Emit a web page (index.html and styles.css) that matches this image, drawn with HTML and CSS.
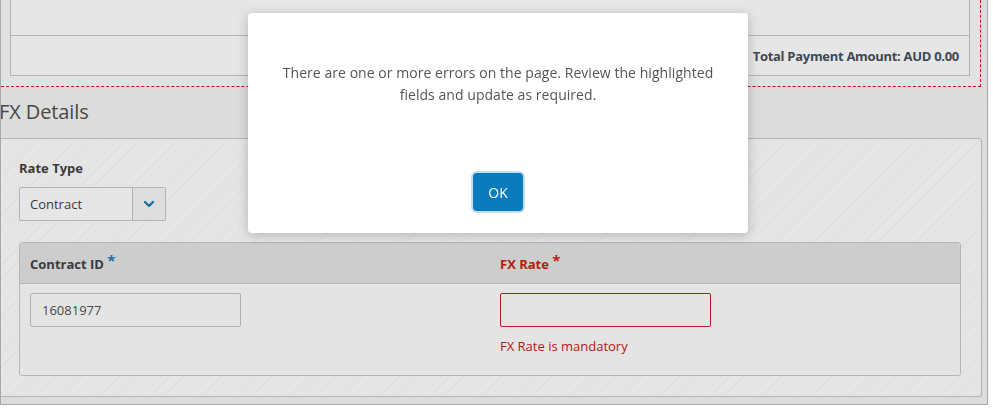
FILE: index.html
```html
<!DOCTYPE html>
<html lang="en">
<head>
<meta charset="utf-8">
<title>FX Details</title>
<link rel="stylesheet" href="styles.css">
</head>
<body>
<div class="page">
  <div class="summary">
    <div class="summary-box">
      <div class="summary-row"></div>
      <div class="summary-row total">Total Payment Amount: AUD 0.00</div>
    </div>
  </div>

  <h2 class="section-title">FX Details</h2>

  <div class="fx-box">
    <div class="field-label">Rate Type</div>
    <div class="select">
      <span class="select-value">Contract</span>
      <span class="select-btn">
        <svg width="12" height="8" viewBox="0 0 12 8"><path d="M2 2 L6 6 L10 2" fill="none" stroke="#1b6e9f" stroke-width="2.4" stroke-linecap="round" stroke-linejoin="round"/></svg>
      </span>
    </div>

    <div class="fx-table">
      <div class="fx-head">
        <div class="fx-cell">Contract ID <span class="req blue">*</span></div>
        <div class="fx-cell error">FX Rate <span class="req red">*</span></div>
      </div>
      <div class="fx-body">
        <div class="fx-cell">
          <div class="input">16081977</div>
        </div>
        <div class="fx-cell">
          <div class="input invalid"></div>
          <div class="error-msg">FX Rate is mandatory</div>
        </div>
      </div>
    </div>
  </div>
</div>

<div class="modal">
  <p class="modal-text">There are one or more errors on the page. Review the highlighted fields and update as required.</p>
  <div class="modal-actions">
    <button class="btn-ok">OK</button>
  </div>
</div>
</body>
</html>
```

FILE: styles.css
```css
* { box-sizing: border-box; }

html, body {
  margin: 0;
  padding: 0;
  background: #ffffff;
  font-family: "Open Sans", "Liberation Sans", sans-serif;
  overflow: hidden;
}

.page {
  width: 988px;
  height: 405px;
  background: #dcdcdc;
  border-left: 1px solid #a9a9a9;
  border-right: 1px solid #a9a9a9;
  border-bottom: 1px solid #a9a9a9;
  box-shadow: 0 2px 3px rgba(0, 0, 0, 0.12);
  overflow: hidden;
}

.summary {
  width: 980px;
  height: 87px;
  background: #e2e2e2;
  border-right: 1px dashed #c2180c;
  border-bottom: 1px dashed #c2180c;
  padding-left: 9px;
}

.summary-box {
  width: 960px;
  background: #e6e6e6;
  border: 1px solid #b3b3b3;
  border-top: none;
}

.summary-row {
  height: 36px;
  border-bottom: 1px solid #b3b3b3;
}

.summary-row.total {
  height: 39px;
  border-bottom: none;
  display: flex;
  align-items: center;
  justify-content: flex-end;
  padding-right: 10px;
  font-size: 13px;
  font-weight: 700;
  color: #3c4955;
  letter-spacing: -0.3px;
}

.section-title {
  margin: 11px 0 12px -2px;
  font-size: 20px;
  line-height: 28px;
  font-weight: 400;
  color: #474747;
  letter-spacing: -0.1px;
}

.fx-box {
  width: 981px;
  height: 259px;
  border: 1px solid #b5b5b5;
  border-left: none;
  border-radius: 0 3px 3px 0;
  background-color: #e4e4e4;
  background-image: repeating-linear-gradient(135deg, #e5e5e5 0px, #e5e5e5 8px, #dfdfdf 8px, #dfdfdf 9px);
  padding: 20px 19px 0 18px;
}

.field-label {
  font-size: 13px;
  line-height: 18px;
  font-weight: 700;
  color: #3a3a3a;
}

.select {
  margin-top: 10px;
  width: 147px;
  height: 34px;
  display: flex;
  border: 1px solid #b3b3b3;
  border-radius: 2px;
  background: #e6e6e6;
}

.select-value {
  width: 113px;
  padding-left: 10px;
  display: flex;
  align-items: center;
  font-size: 13px;
  color: #3a3a3a;
  border-right: 1px solid #b3b3b3;
}

.select-btn {
  flex: 1;
  display: flex;
  align-items: center;
  justify-content: center;
  background: #dedede;
}

.fx-table {
  margin-top: 21px;
  width: 942px;
  border: 1px solid #b5b5b5;
  border-radius: 3px;
  overflow: hidden;
}

.fx-head,
.fx-body {
  display: grid;
  grid-template-columns: 470px 1fr;
}

.fx-head {
  height: 41px;
  background: #cdcdcd;
  border-bottom: 1px solid #b5b5b5;
  align-items: center;
}

.fx-head .fx-cell {
  padding-left: 10px;
  font-size: 13px;
  font-weight: 700;
  color: #3a3a3a;
}

.fx-head .fx-cell.error { color: #b0200f; }

.req {
  font-size: 15px;
  font-weight: 700;
  position: relative;
  top: -3px;
}
.req.blue { color: #1c6fae; }
.req.red { color: #c0200d; }

.fx-body {
  background: #e4e4e4;
  height: 91px;
}

.fx-body .fx-cell {
  padding: 9px 0 0 10px;
}

.input {
  width: 211px;
  height: 34px;
  border: 1px solid #b0b0b0;
  border-radius: 2px;
  background: #e4e4e4;
  padding-left: 11px;
  display: flex;
  align-items: center;
  font-size: 13px;
  color: #4a4a4a;
}

.input.invalid {
  border-color: #b0200f;
}

.error-msg {
  margin-top: 10px;
  font-size: 13px;
  line-height: 18px;
  color: #b0200f;
}

.modal {
  position: fixed;
  left: 248px;
  top: 13px;
  width: 500px;
  height: 220px;
  background: #ffffff;
  border-radius: 4px;
  box-shadow: 0 2px 12px rgba(0, 0, 0, 0.22);
  display: flex;
  flex-direction: column;
  padding: 49px 30px 20px;
}

.modal-text {
  margin: 0;
  text-align: center;
  font-size: 14px;
  line-height: 22px;
  color: #555555;
  letter-spacing: 0.05px;
}

.modal-actions {
  margin-top: auto;
  display: flex;
  justify-content: center;
}

.btn-ok {
  width: 50px;
  height: 38px;
  margin: 2px;
  border: none;
  border-radius: 4px;
  background: #0a7bbd;
  box-shadow: 0 0 0 2px #bfe0f2;
  color: #ffffff;
  font-family: "Open Sans", "Liberation Sans", sans-serif;
  font-size: 14px;
  padding: 0;
}
```
